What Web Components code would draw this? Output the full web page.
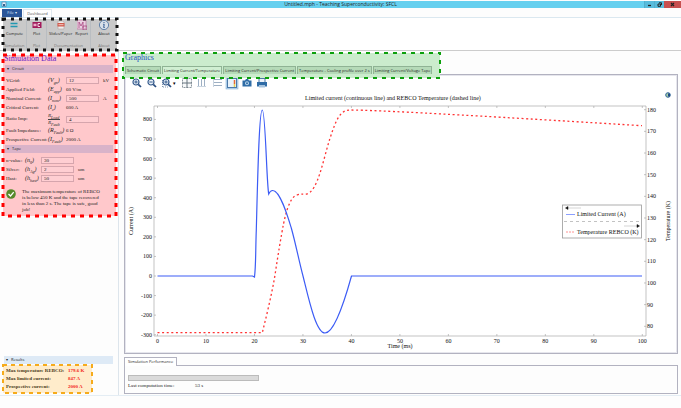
<!DOCTYPE html>
<html lang="en">
<head>
<meta charset="utf-8">
<title>Untitled.mph - Teaching Superconductivity: SFCL</title>
<style>
  body {
    margin: 0;
    background: #fdfdfd;
    color: #222;
    font: 5px/6px "Liberation Serif", serif;
    --ui: "Open Sans", "Noto Sans", sans-serif;
  }
</style>
</head>
<body>
<sfcl-app></sfcl-app>

<script>
const define = (name, html) => {
  customElements.define(name, class extends HTMLElement {
    constructor() {
      super();
      this.root = this.attachShadow({ mode: 'open' });
    }

    connectedCallback() {
      this.root.innerHTML = html(this);
    }
  });
};

const attr = (el, name) => el.getAttribute(name) || '';

// dashed highlight frame drawn over whatever is slotted in
define('marked-area', el => `
  <style>
    :host { display: block; position: relative; }
    svg { position: absolute; inset: 0; width: 100%; height: 100%; overflow: visible; pointer-events: none; z-index: 1; }
    rect { fill: none; stroke: ${attr(el, 'color')}; stroke-width: ${attr(el, 'weight') || 2}; stroke-dasharray: ${attr(el, 'dash') || '4 5'}; }
  </style>
  <slot></slot>
  <svg aria-hidden="true"><rect width="100%" height="100%"/></svg>
`);

define('title-bar', () => `
  <style>
    :host { display: grid; grid-template-columns: 1fr auto 1fr; height: 7px; margin-top: 1px; background: #66d0ef; color: #222; font: 5px/7px var(--ui); }
    .logo { width: 6px; margin-left: 1px; }
    h1 { margin: 0; font: inherit; }
    .controls { display: flex; justify-content: flex-end; }
    button { border: 0; padding: 0; width: 10px; background: #58bcdc; display: grid; place-items: center; border-left: 1px solid #52afcd; }
    .close { width: 17px; background: #c75050; border: 0; }
    svg { display: block; }
  </style>
  <svg class="logo" viewBox="0 0 6 7"><rect x="1" y="1" width="4" height="4.500" fill="#e5f3fb" stroke="#477aa6" stroke-width=".7"/><path d="M2 3h2v2H2z" fill="#31648f"/></svg>
  <h1>Untitled.mph - Teaching Superconductivity: SFCL</h1>
  <div class="controls">
    <button aria-label="Minimize"><svg width="5" height="5"><path d="M1 3.500h3" stroke="#222" stroke-width="1.300"/></svg></button>
    <button aria-label="Restore"><svg width="5" height="5" fill="none" stroke="#222"><path d="M1 2h2.500v2.300H1zM2 .8h2.500V3"/></svg></button>
    <button class="close" aria-label="Close"><svg width="5" height="5" stroke="#222" stroke-width="1.200"><path d="M1 1l3 3M4 1L1 4"/></svg></button>
  </div>
`);

define('ribbon-tabs', () => `
  <style>
    :host { display: flex; align-items: flex-end; height: 8px; padding: 1px 0 0 2px; border-bottom: 1px solid #dbe8f0; font: 4px/8px var(--ui); }
    button { font: inherit; border: 0; padding: 0; height: 8px; }
    .file { width: 20px; background: #2a5699; color: #dce8fa; }
    .dash { width: 29px; margin-left: 1px; background: #fff; border: 1px solid #dfe8ef; border-bottom: 0; color: #555; }
  </style>
  <button class="file">File ▾</button>
  <button class="dash">Dashboard</button>
`);

const icons = {
  compute: '<path d="M1.500 3.500h7M1.500 6.500h7" stroke="#2299b2" stroke-width="1.600"/>',
  plot: '<rect x=".5" y="2" width="9" height="6" fill="#a2195b"/><rect x="1.500" y="3.700" width="3" height="2.500" fill="#e9afc9"/><path d="M8 3.500H6v3h2" stroke="#fff" stroke-width=".8" fill="none"/>',
  slides: '<path d="M2 1h5l1 1.500V9H2z" fill="#eee" stroke="#b9a6a3" stroke-width=".7"/><rect x="1.500" y="3" width="7" height="3.500" fill="#d15a4c"/><path d="M2.500 4.700h5" stroke="#f3c8c2"/>',
  report: '<rect x="0" y="0" width="9" height="9" fill="#ead2e1" stroke="#b76396" stroke-width=".6"/><path d="M2 8V2l2 4 2-4v6M6 6h4v4H6z" fill="none" stroke="#aa4682" stroke-width=".8"/>',
  about: '<circle cx="5" cy="5" r="4.600" fill="#d8e0e9" stroke="#456d9d" stroke-width=".8"/><path d="M5 2v1M4.200 4.300h1L4.700 7.500h1" fill="none" stroke="#315a91" stroke-width="1"/>'
};

define('ribbon-button', el => `
  <style>
    :host { display: block; }
    button { display: flex; flex-direction: column; align-items: center; gap: 1px; border: 0; padding: 0; background: none; font: 4px/6px var(--ui); color: #222; white-space: nowrap; }
    svg { width: 10px; height: 10px; }
  </style>
  <button><svg viewBox="0 0 10 10">${icons[attr(el, 'icon')]}</svg><slot></slot></button>
`);

define('ribbon-group', el => `
  <style>
    :host { display: flex; flex-direction: column; justify-content: space-between; align-items: center; box-sizing: border-box; padding: 1px 1px 2px; border-right: 1px solid #b9bdc1; }
    :host(:last-of-type) { border: 0; }
    div { display: flex; gap: 3px; }
    small { font: 4px/5px var(--ui); color: #777; }
  </style>
  <div><slot></slot></div>
  <small>${attr(el, 'label')}</small>
`);

define('app-ribbon', () => `
  <style>
    :host { display: block; padding: 1px 0 0 3px; border-bottom: 1px solid #ccc; background: #fff; }
    marked-area { width: 114px; }
    .groups { display: grid; grid-template-columns: 24px 20px 44px 26px; height: 31px; background: #c9c9c9; }
  </style>
  <marked-area color="#111" weight="3" dash="3 5">
    <div class="groups">
      <ribbon-group label="Simulation"><ribbon-button icon="compute">Compute</ribbon-button></ribbon-group>
      <ribbon-group label="Plot"><ribbon-button icon="plot">Plot</ribbon-button></ribbon-group>
      <ribbon-group label="Documentation"><ribbon-button icon="slides">Slides/Paper</ribbon-button><ribbon-button icon="report">Report</ribbon-button></ribbon-group>
      <ribbon-group label="About"><ribbon-button icon="about">About</ribbon-button></ribbon-group>
    </div>
  </marked-area>
`);

define('section-bar', () => `
  <style>
    :host { display: block; }
    h3 { display: flex; gap: 3px; margin: 0; padding-left: 2px; font: 4px/8px var(--ui); color: #222; background: var(--bar, #d9b3c9); }
  </style>
  <h3><span>▾</span><slot></slot></h3>
`);

// label, symbol, then an input or a fixed value, then the unit
define('data-row', el => `
  <style>
    :host { display: grid; grid-template-columns: var(--cols, 42px 18px 33px 1fr); align-items: center; min-height: 9px; white-space: nowrap; }
    .symbol { font-size: 6px; font-style: italic; }
    input { box-sizing: border-box; width: 100%; height: 7px; padding: 0 2px; border: 1px solid #d6a5ad; background: #ffced2; font: inherit; color: inherit; line-height: 5px; }
    .unit { padding-left: 4px; }
  </style>
  <label for="value">${attr(el, 'label')}</label>
  <span class="symbol"><slot></slot></span>
  ${el.hasAttribute('fixed')
    ? `<output id="value">${attr(el, 'value')}</output>`
    : `<input id="value" value="${attr(el, 'value')}">`}
  <span class="unit">${attr(el, 'unit')}</span>
`);

define('status-message', () => `
  <style>
    :host { display: flex; gap: 6px; padding: 5px 12px 3px 1px; line-height: 6px; }
    svg { flex: none; width: 10px; height: 10px; }
    p { margin: 0; }
  </style>
  <svg viewBox="0 0 10 10"><circle cx="5" cy="5" r="4.800" fill="#568a2b"/><path d="M2.500 5l2 2 3.200-3.800" fill="none" stroke="#fff" stroke-width="1.300"/></svg>
  <p><slot></slot></p>
`);

define('side-panel', () => `
  <style>
    :host { display: flex; flex-direction: column; justify-content: space-between; box-sizing: border-box; padding: 4px 0 2px 3px; border-right: 1px solid #dde5ec; }
    h2 { margin: 0; padding-left: 1px; font: 8px/7px "Liberation Serif", serif; color: #6a1fc4; }
    .inputs { width: 113px; background: #ffc8cb; }
    .body { padding: 3px 3px 0 2px; }
    .rows { padding: 3px 0 1px 1px; }
    .tape { --cols: 19px 16px 33px 1fr; }
    .fraction { display: inline-flex; flex-direction: column; font-size: 5px; line-height: 6px; }
    .fraction span:first-child { border-bottom: 1px solid #444; }
    sub { font-size: 4px; line-height: 0; }
    .results { --bar: #deeaf6; }
    .results section-bar { padding: 0 5px 0 1px; }
    .results marked-area { width: 89px; }
    dl { display: grid; grid-template-columns: 62px 1fr; row-gap: 2px; margin: 1px 0 0; padding: 3px; background: #ffeccb; font-weight: bold; color: #4b3a20; }
    dd { margin: 0; color: #f3281c; }
  </style>
  <marked-area class="inputs" color="#f00" weight="3" dash="4 5">
    <h2>Simulation Data</h2>
    <div class="body">
      <section-bar>Circuit</section-bar>
      <div class="rows">
        <data-row label="VGrid:" value="12" unit="kV">(V<sub>gn</sub>)</data-row>
        <data-row label="Applied Field:" value="60 V/m" fixed>(E<sub>app</sub>)</data-row>
        <data-row label="Nominal Current:" value="500" unit="A">(I<sub>nom</sub>)</data-row>
        <data-row label="Critical Current:" value="600 A" fixed>(I<sub>c</sub>)</data-row>
        <data-row label="Ratio Imp:" value="4"><span class="fraction"><span>R<sub>Load</sub></span><span>R<sub>Fault</sub></span></span></data-row>
        <data-row label="Fault Impedance:" value="6 Ω" fixed>(R<sub>Fault</sub>)</data-row>
        <data-row label="Prospective Current:" value="2000 A" fixed>(I<sub>Fault</sub>)</data-row>
      </div>
      <section-bar>Tape</section-bar>
      <div class="rows tape">
        <data-row label="n-value:" value="30">(n<sub>0</sub>)</data-row>
        <data-row label="Silver:" value="2" unit="um">(h<sub>Ag</sub>)</data-row>
        <data-row label="Hast:" value="50" unit="um">(h<sub>hast</sub>)</data-row>
      </div>
      <status-message>The maximum temperature of REBCO is below 450 K and the tape recovered in less than 2 s. The tape is safe, good job!</status-message>
    </div>
  </marked-area>
  <div class="results">
    <section-bar>Results</section-bar>
    <marked-area color="#f6ab1b" dash="4 4">
      <dl>
        <dt>Max temperature REBCO:</dt><dd>179.6 K</dd>
        <dt>Max limited current:</dt><dd>847 A</dd>
        <dt>Prospective current:</dt><dd>2000 A</dd>
      </dl>
    </marked-area>
  </div>
`);

const lens = '<circle cx="4" cy="4" r="3" fill="#edf3fa" stroke="#355b8c" stroke-width="1.200"/><path d="M6.300 6.300L9 9" stroke="#284c7e" stroke-width="1.700"/>';
const tools = [
  ['Zoom in', lens + '<path d="M2.300 4h3.400M4 2.300v3.400" stroke="#355b8c"/>'],
  ['Zoom out', lens + '<path d="M2.300 4h3.400" stroke="#355b8c"/>'],
  ['Zoom box', '<path d="M.5 9V1M1 9h5" stroke="#8095af" stroke-dasharray="1 1"/>' + lens + '<path d="M2.300 4h3.400M4 2.300v3.400" stroke="#355b8c"/>', true],
  ['Zoom extents', '<rect x=".5" y=".5" width="9" height="9" fill="#f7f9fa" stroke="#8c979f" stroke-dasharray="2 1"/><path d="M5 0v10M0 5h10" stroke="#66747f"/>'],
  ['X grid', '<path d="M1.500 1v8M4.500 1v8M7.500 1v8" stroke="#9eb0c4"/><path d="M0 8.500h9" stroke="#c9d4df"/>'],
  ['Y grid', '<path d="M1 1.500h9M1 4.500h9M1 7.500h9" stroke="#9eb0c4"/><path d="M1.500 1v8" stroke="#c9d4df"/>'],
  ['Show legends', '<rect x="-1" y="-1" width="12" height="12" fill="#b5d5ef" stroke="#8db5d8" stroke-width=".6"/><rect x=".5" y=".5" width="9" height="9" fill="#e8f3fb" stroke="#4b79a8"/><path d="M7.500 2v4" stroke="#e66a35" stroke-width="1.500"/><path d="M7.500 6v3" stroke="#e7cd52" stroke-width="1.500"/>'],
  ['Image snapshot', '<path d="M.5 2.500h2.500L4 1h2l1 1.500h2.500v6h-9z" fill="#2f6ca6"/><circle cx="5" cy="5.300" r="2" fill="#b8d3e9"/><circle cx="5" cy="5.300" r="1" fill="#2f6ca6"/>'],
  ['Print', '<path d="M2 4V.5h6V4" fill="#edf3fa" stroke="#4b79a8"/><path d="M0 4h10v4.500H0z" fill="#2f6ca6"/><path d="M2 7h6v2.500H2z" fill="#a8c5df"/>']
];

define('graphics-tools', () => `
  <style>
    :host { display: flex; gap: 5px; padding: 3px 0 2px 6px; }
    button { display: flex; align-items: center; border: 0; padding: 0; background: none; font: 5px/6px var(--ui); }
    svg { width: 10px; height: 10px; overflow: visible; }
    i { width: 5px; font-style: normal; }
  </style>
  ${tools.map(([name, art, menu]) => `<button aria-label="${name}"><svg viewBox="0 0 10 10" fill="none">${art}</svg>${menu ? '<i>▾</i>' : ''}</button>`).join('')}
`);

define('current-chart', () => {
  const x = v => 31.5 + v * 4.848;
  const amp = v => 186 - v * 0.1957;
  const kelvin = v => 19.7 + (180 - v) * 2.166;
  const range = (from, to, step) => Array.from({ length: (to - from) / step + 1 }, (_, i) => from + i * step);
  const xAxis = range(0, 100, 10).map(v => `
    <path class="axis" d="M${x(v)} 246v-2M${x(v)} 16v2"/>
    <text x="${x(v)}" y="253" text-anchor="middle">${v}</text>`).join('');
  const left = range(-300, 800, 100).map(v => `
    <path class="axis" d="M28 ${amp(v)}h2"/>
    <text x="26" y="${amp(v) + 2}" text-anchor="end">${v}</text>`).join('');
  const right = range(80, 180, 10).map(v => `
    <path class="axis" d="M520 ${kelvin(v)}h-2"/>
    <text x="521" y="${kelvin(v) + 2}">${v}</text>`).join('');

  return `
  <style>
    :host { display: block; }
    svg { display: block; width: 100%; height: auto; }
    text { font: 6px "Liberation Serif", serif; fill: #111; }
    .axis { fill: none; stroke: #aaa; stroke-width: .7; }
    .current { fill: none; stroke: #3c5cf5; stroke-width: 1.2; }
    .temp { fill: none; stroke: #f33; stroke-width: 1.3; stroke-dasharray: 2 2.6; }
  </style>
  <svg viewBox="0 0 550 260" role="img" aria-label="Limited current and REBCO temperature over time">
    <text x="267" y="10" text-anchor="middle">Limited current (continuous line) and REBCO Temperature (dashed line)</text>
    <path class="axis" d="M28 16h492v230H28z"/>
    ${xAxis}${left}${right}
    <text x="274" y="258" text-anchor="middle">Time (ms)</text>
    <text transform="translate(7 131) rotate(-90)" text-anchor="middle">Current (A)</text>
    <text transform="translate(544 131) rotate(-90)" text-anchor="middle">Temperature (K)</text>
    <path class="temp" d="M31.500 242.700H136.300C141 224 146 203 149 185C152 165 155 147 157.300 135C159 127 163 107 171 105C175 103.500 177 104.500 180.700 104C192 101 197 70 204 48.300C210 30 214 20 224 20Q260 20 516 35.700"/>
    <path class="current" d="M31.500 186H126.500L128.500 187C130 175 129.500 160 130.300 140C131.500 95 133 20 136.300 20C139.500 20 140.500 92 142.700 104C144 101 145 100.300 147 100.500C154 101 161 124 165.300 138C170 155 173 171 177 186C183 210 190 243 199 243C208 243 218 213 225.500 186H516"/>
    <g>
      <rect x="436.500" y="115" width="79" height="33" fill="#fff" stroke="#999" stroke-width=".8"/>
      <path d="M440 118h15M498 136h14" stroke="#bbb" stroke-width=".6"/>
      <path d="M439.500 118l2.500-1.500v3zM513.500 136l-2.500-1.500v3z" fill="#111" stroke="#111" stroke-width=".5"/>
      <path d="M440 124.500h9" stroke="#6f87ff" stroke-width=".8"/>
      <path d="M440 142h9" stroke="#ff7777" stroke-width=".8" stroke-dasharray="2 1"/>
      <path d="M438 131.500h76" stroke="#999" stroke-width=".6" stroke-dasharray="3 3"/>
      <text x="451" y="126">Limited Current (A)</text>
      <text x="451" y="144">Temperature REBCO (K)</text>
    </g>
    <circle cx="542" cy="5" r="2.300" fill="#a9d0a4" stroke="#31649b" stroke-width="1"/><path d="M542 3.500v3h2v-3z" fill="#204985"/>
  </svg>`;
});

define('graphics-panel', () => `
  <style>
    :host { display: block; }
    marked-area { width: fit-content; min-width: 317px; background: #cbeccd; }
    h2 { margin: 0; padding: 1px 0 4px 2px; font: 8px/8px "Liberation Serif", serif; color: #234ec0; }
    .tabs { display: flex; gap: 1px; padding: 0 0 4px 2px; }
    .tabs button { border: 1px solid #8fb394; border-bottom: 0; padding: 0 1px; height: 8px; background: #b5dab8; font: 4px/7px var(--ui); color: #222; white-space: nowrap; }
    .tabs [aria-selected=true] { background: #d0efd2; }
    .panel { margin: -4px 0 0 1px; border: 1px solid #b2b2c0; box-shadow: inset 0 0 0 1px #e6e6ed; padding: 0 1px 3px; background: #fff; }
  </style>
  <marked-area color="#0ca00c" dash="4 5">
    <h2>Graphics</h2>
    <div class="tabs" role="tablist">
      <button role="tab">Schematic Circuit</button>
      <button role="tab" aria-selected="true">Limiting Current/Temperature</button>
      <button role="tab">Limiting Current/Prospective Current</button>
      <button role="tab">Temperature - Cooling profile over 2 s</button>
      <button role="tab">Limiting Current/Voltage Tape</button>
    </div>
  </marked-area>
  <div class="panel">
    <graphics-tools></graphics-tools>
    <current-chart></current-chart>
  </div>
`);

define('performance-panel', () => `
  <style>
    :host { display: block; margin-left: 1px; }
    .tab { display: block; margin-bottom: -1px; border: 1px solid #b2b2c0; border-bottom: 0; padding: 0 3px; height: 9px; position: relative; background: #fff; font: 4px/8px var(--ui); color: #222; }
    .box { border: 1px solid #b2b2c0; padding: 9px 3px 4px; }
    progress { display: block; appearance: none; box-sizing: border-box; width: 131px; height: 6px; border: 1px solid #bbb; background: #dadada; }
    progress::-webkit-progress-bar { background: #dadada; }
    .time { display: grid; grid-template-columns: 67px 1fr; margin-top: 2px; }
  </style>
  <button class="tab">Simulation Performance</button>
  <div class="box">
    <progress value="0" max="100" aria-label="Computation progress"></progress>
    <div class="time"><span>Last computation time:</span><span>53 s</span></div>
  </div>
`);

define('sfcl-app', () => `
  <style>
    :host { display: block; overflow: hidden; }
    main { display: grid; grid-template-columns: 119px 1fr; column-gap: 4px; border-bottom: 1px solid #e4edf4; }
    .right { display: flex; flex-direction: column; gap: 3px; padding: 2px 3px 1px 0; min-width: 0; }
  </style>
  <title-bar></title-bar>
  <ribbon-tabs></ribbon-tabs>
  <app-ribbon></app-ribbon>
  <main>
    <side-panel></side-panel>
    <div class="right">
      <graphics-panel></graphics-panel>
      <performance-panel></performance-panel>
    </div>
  </main>
`);
</script>
</body>
</html>
